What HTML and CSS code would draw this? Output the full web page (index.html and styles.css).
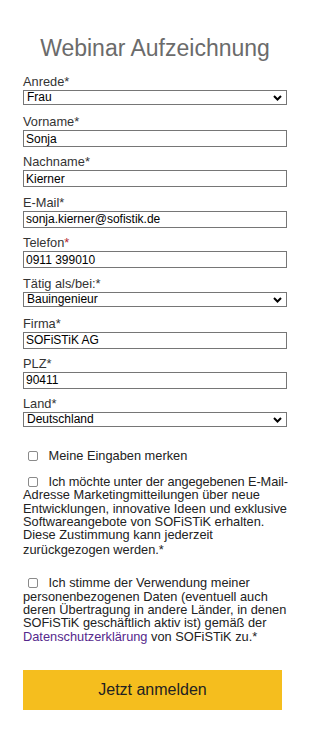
FILE: index.html
```html
<!DOCTYPE html>
<html lang="de">
<head>
<meta charset="utf-8">
<title>Webinar Aufzeichnung</title>
<link rel="stylesheet" href="styles.css">
</head>
<body>
<div class="page">
  <h1 class="title">Webinar Aufzeichnung</h1>
  <form class="form">
    <div class="field field-sel">
      <label class="lbl">Anrede*</label>
      <div class="sel">
        <select class="ctl ctl-sel"><option>Frau</option></select>
        <svg class="chev" viewBox="0 0 9 6" width="9" height="6"><path d="M1 1 L4.5 4.5 L8 1" fill="none" stroke="#000" stroke-width="2"/></svg>
      </div>
    </div>
    <div class="field">
      <label class="lbl">Vorname*</label>
      <input class="ctl" type="text" value="Sonja">
    </div>
    <div class="field">
      <label class="lbl">Nachname*</label>
      <input class="ctl" type="text" value="Kierner">
    </div>
    <div class="field">
      <label class="lbl">E-Mail*</label>
      <input class="ctl" type="text" value="sonja.kierner@sofistik.de">
    </div>
    <div class="field">
      <label class="lbl">Telefon<span class="req">*</span></label>
      <input class="ctl" type="text" value="0911 399010">
    </div>
    <div class="field field-sel">
      <label class="lbl">Tätig als/bei:*</label>
      <div class="sel">
        <select class="ctl ctl-sel"><option>Bauingenieur</option></select>
        <svg class="chev" viewBox="0 0 9 6" width="9" height="6"><path d="M1 1 L4.5 4.5 L8 1" fill="none" stroke="#000" stroke-width="2"/></svg>
      </div>
    </div>
    <div class="field">
      <label class="lbl">Firma*</label>
      <input class="ctl" type="text" value="SOFiSTiK AG">
    </div>
    <div class="field">
      <label class="lbl">PLZ*</label>
      <input class="ctl" type="text" value="90411">
    </div>
    <div class="field field-sel">
      <label class="lbl">Land*</label>
      <div class="sel">
        <select class="ctl ctl-sel"><option>Deutschland</option></select>
        <svg class="chev" viewBox="0 0 9 6" width="9" height="6"><path d="M1 1 L4.5 4.5 L8 1" fill="none" stroke="#000" stroke-width="2"/></svg>
      </div>
    </div>

    <p class="check check-1"><input class="cb" type="checkbox"> Meine Eingaben merken</p>
    <p class="check check-2"><input class="cb" type="checkbox"> <span class="tight">Ich möchte unter der angegebenen E-Mail-</span><br>Adresse Marketingmitteilungen über neue<br>Entwicklungen, innovative Ideen und exklusive<br>Softwareangebote von SOFiSTiK erhalten.<br>Diese Zustimmung kann jederzeit<br><span class="last">zurückgezogen werden.*</span></p>
    <p class="check check-3"><input class="cb" type="checkbox"> Ich stimme der Verwendung meiner<br>personenbezogenen Daten (eventuell auch<br>deren Übertragung in andere Länder, in denen<br>SOFiSTiK geschäftlich aktiv ist) gemäß der<br><a class="link" href="#">Datenschutzerklärung</a> von SOFiSTiK zu.*</p>

    <button class="btn" type="button">Jetzt anmelden</button>
  </form>
</div>
</body>
</html>
```

FILE: styles.css
```css
body {
  margin: 0;
  background: #fff;
  font-family: "Liberation Sans", Arial, sans-serif;
  color: #222;
}

.page {
  width: 264px;
  margin-left: 23px;
  padding-top: 35px;
}

.title {
  margin: 0 0 14px;
  font-size: 23px;
  line-height: 26px;
  font-weight: normal;
  color: #6b6b6b;
  text-align: center;
  white-space: nowrap;
}

.form {
  display: flex;
  flex-direction: column;
}

.field {
  display: flex;
  flex-direction: column;
  margin-bottom: 8.4px;
}

.field-sel {
  margin-bottom: 10px;
}

.lbl {
  font-size: 12.8px;
  line-height: 13px;
  margin-bottom: 2px;
  color: #333;
}

.req {
  color: #b3262b;
}

.ctl {
  box-sizing: border-box;
  width: 100%;
  height: 17px;
  margin: 0;
  padding: 0 2px;
  border: 1px solid #767676;
  border-radius: 0;
  background: #fff;
  font-family: "Liberation Sans", Arial, sans-serif;
  font-size: 12px;
  color: #000;
  outline: none;
}

.sel {
  position: relative;
}

.ctl-sel {
  display: block;
  height: 15px;
  line-height: 13px;
  padding: 0 16px 0 3px;
  appearance: none;
  -webkit-appearance: none;
}

.chev {
  position: absolute;
  right: 5px;
  top: 5px;
  pointer-events: none;
}

.check {
  margin: 0;
  font-size: 12.8px;
  line-height: 13.4px;
  color: #222;
  white-space: nowrap;
}

.check-1 {
  margin-top: 12px;
}

.check-2 {
  margin-top: 12px;
}

.check-3 {
  margin-top: 20px;
}

.tight {
  letter-spacing: -0.1px;
}

.last {
  display: inline-block;
  margin-top: 1px;
}

.cb {
  appearance: none;
  -webkit-appearance: none;
  box-sizing: border-box;
  width: 10px;
  height: 10px;
  margin: 0 7px 0 5px;
  border: 1px solid #8a8a8a;
  border-radius: 2px;
  background: #fff;
  vertical-align: -1px;
}

.link {
  color: #55288c;
  text-decoration: none;
}

.btn {
  box-sizing: border-box;
  width: 259px;
  height: 40px;
  margin-top: 27px;
  padding: 0;
  border: none;
  border-radius: 0;
  background: #f5be1e;
  color: #222;
  font-family: "Liberation Sans", Arial, sans-serif;
  font-size: 16px;
  cursor: pointer;
}
```
